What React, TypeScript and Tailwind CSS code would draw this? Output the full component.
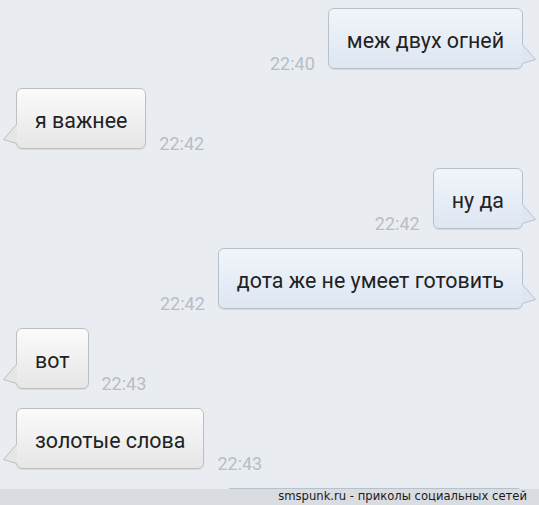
type Msg = { text: string; time: string; out: boolean };

const messages: Msg[] = [
  { text: "меж двух огней", time: "22:40", out: true },
  { text: "я важнее", time: "22:42", out: false },
  { text: "ну да", time: "22:42", out: true },
  { text: "дота же не умеет готовить", time: "22:42", out: true },
  { text: "вот", time: "22:43", out: false },
  { text: "золотые слова", time: "22:43", out: false },
];

const Tail = ({ out }: { out: boolean }) => {
  const fill = out ? "#dde6f2" : "#e6e6e6";
  const stroke = out ? "#b7c1ce" : "#bfbfbf";
  return (
    <svg
      width="15"
      height="21"
      viewBox="0 0 15 21"
      className={
        out
          ? "absolute right-[-15px] bottom-[3px]"
          : "absolute left-[-15px] bottom-[3px] -scale-x-100"
      }
    >
      <path d="M0 0 L13.5 15.5 L0 20 Z" fill={fill} />
      <path d="M0.5 0.5 L13.5 15.5 L0.5 19.5" fill="none" stroke={stroke} strokeWidth="1" />
    </svg>
  );
};

const Bubble = ({ msg }: { msg: Msg }) => (
  <div
    className={
      "relative h-[61px] px-[18px] pt-[6px] flex items-center rounded-[6px] border shadow-[0_1px_1px_rgba(0,0,0,0.08)] text-[21.4px] text-[#222] " +
      (msg.out
        ? "border-[#b7c1ce] bg-gradient-to-b from-[#f1f5fa] to-[#dde6f2]"
        : "border-[#bfbfbf] bg-gradient-to-b from-[#fbfbfb] to-[#e6e6e6]")
    }
  >
    <span className="whitespace-nowrap">{msg.text}</span>
    <Tail out={msg.out} />
  </div>
);

const Time = ({ time }: { time: string }) => (
  <span className="text-[18px] leading-none text-[#b8bdc6] mb-[-4px]">{time}</span>
);

export default function App() {
  return (
    <div className="relative w-[539px] h-[505px] overflow-hidden bg-[#e9ecf1] font-['Roboto',sans-serif]">
      <div className="flex flex-col gap-[19px] pt-[8px]">
        {messages.map((m, i) =>
          m.out ? (
            <div key={i} className="flex items-end justify-end gap-[13px] pr-[16px]">
              <Time time={m.time} />
              <Bubble msg={m} />
            </div>
          ) : (
            <div key={i} className="flex items-end gap-[13px] pl-[16px]">
              <Bubble msg={m} />
              <Time time={m.time} />
            </div>
          )
        )}
        {/* next outgoing bubble, hidden under the watermark bar */}
        <div className="flex justify-end pr-[16px]">
          <div className="w-[298px] h-[61px] rounded-[6px] border border-[#b7c1ce] bg-gradient-to-b from-[#f1f5fa] to-[#dde6f2]" />
        </div>
      </div>

      {/* watermark bar */}
      <div className="absolute left-0 right-0 bottom-0 h-[16px] bg-[#d9dce1] flex items-center justify-end pr-[12px]">
        <span className="font-['DejaVu_Sans',sans-serif] text-[11.6px] leading-none text-[#1a1a1a]">
          smspunk.ru - приколы социальных сетей
        </span>
      </div>
    </div>
  );
}
